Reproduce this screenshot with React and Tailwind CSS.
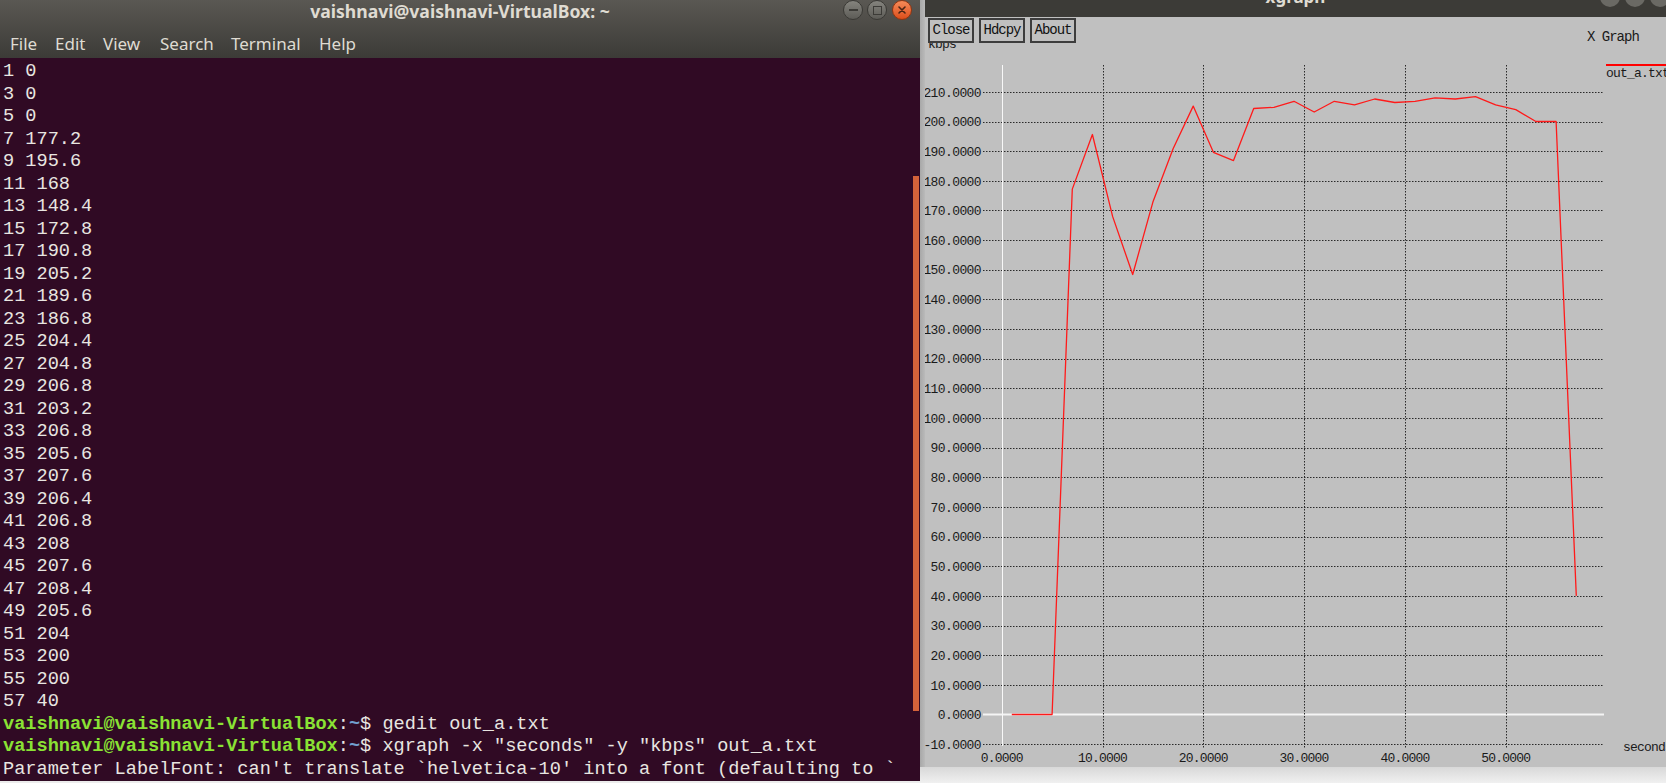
import React from 'react';

const rows = [
  '1 0', '3 0', '5 0', '7 177.2', '9 195.6', '11 168', '13 148.4', '15 172.8',
  '17 190.8', '19 205.2', '21 189.6', '23 186.8', '25 204.4', '27 204.8', '29 206.8',
  '31 203.2', '33 206.8', '35 205.6', '37 207.6', '39 206.4', '41 206.8', '43 208',
  '45 207.6', '47 208.4', '49 205.6', '51 204', '53 200', '55 200', '57 40'
];

const points = rows.map(r => r.split(' ').map(Number));

// page coords of the xgraph canvas
const X = t => 1001.7 + t * 10.08;
const Y = v => 714.5 - v * 2.965;
const yTicks = [];
for (let v = -10; v <= 210; v += 10) yTicks.push(v);
const xTicks = [0, 10, 20, 30, 40, 50];

const mono = "'Liberation Mono', 'DejaVu Sans Mono', monospace";

const menu = [
  ['File', 'w-[45px]'],
  ['Edit', 'w-[48px]'],
  ['View', 'w-[57px]'],
  ['Search', 'w-[71px]'],
  ['Terminal', 'w-[88px]'],
  ['Help', 'w-[45px]'],
];

function Prompt({ cmd }) {
  return (
    <div className="whitespace-pre h-[22.5px]">
      <span className="font-bold text-[#8ae234]">vaishnavi@vaishnavi-VirtualBox</span>
      <span>:</span>
      <span className="font-bold text-[#729fcf]">~</span>
      <span>$ {cmd}</span>
    </div>
  );
}

function WinButtons() {
  return (
    <div className="flex gap-[4px] items-start">
      <div className="w-[20px] h-[20px] rounded-full bg-gradient-to-b from-[#85847e] to-[#5d5c57] border border-[#3a3935] flex items-center justify-center">
        <div className="w-[9px] h-[2px] bg-[#3c3b37]" />
      </div>
      <div className="w-[20px] h-[20px] rounded-full bg-gradient-to-b from-[#85847e] to-[#5d5c57] border border-[#3a3935] flex items-center justify-center">
        <div className="w-[9px] h-[9px] border-[1.5px] border-[#3c3b37]" />
      </div>
      <div className="w-[20px] h-[20px] ml-[1px] rounded-full bg-gradient-to-b from-[#f58a58] to-[#dc4d17] border border-[#8f3512] flex items-center justify-center">
        <svg width="10" height="10" viewBox="0 0 10 10">
          <path d="M2 2 L8 8 M8 2 L2 8" stroke="#4a2414" strokeWidth="1.6" strokeLinecap="round" />
        </svg>
      </div>
    </div>
  );
}

function Terminal() {
  return (
    <div className="w-[920px] h-[781px] flex flex-col shrink-0">
      <div className="h-[58px] bg-gradient-to-b from-[#5a5853] to-[#3c3b37] flex flex-col text-[#dfdbd2] font-['Noto_Sans',sans-serif]">
        <div className="h-[30px] grid grid-cols-[1fr_auto_1fr]">
          <div />
          <div className="text-[17.6px] leading-[22px] font-bold">vaishnavi@vaishnavi-VirtualBox: ~</div>
          <div className="flex justify-end pr-[8px]">
            <WinButtons />
          </div>
        </div>
        <div className="h-[28px] flex items-center pl-[10px] text-[17px]">
          {menu.map(([m, w]) => (
            <span key={m} className={w}>{m}</span>
          ))}
        </div>
      </div>
      <div className="flex-1 bg-[#300a24] flex overflow-hidden">
        <div className="flex-1 pl-[3px] pt-[3px] text-[18.6px] leading-[22.5px] text-[#e8e6e1] font-['Liberation_Mono',monospace]">
          {rows.map(r => (
            <div key={r} className="whitespace-pre h-[22.5px]">{r}</div>
          ))}
          <Prompt cmd="gedit out_a.txt" />
          <Prompt cmd={'xgraph -x "seconds" -y "kbps" out_a.txt'} />
          <div className="whitespace-pre h-[22.5px]">Parameter LabelFont: can't translate `helvetica-10' into a font (defaulting to `</div>
        </div>
        <div className="w-[6px] mr-[1px]">
          <div className="mt-[118px] h-[535px] bg-[#d3623a]" />
        </div>
      </div>
    </div>
  );
}

function Plot() {
  return (
    <svg width="741" height="750" viewBox="925 17 741 750" className="block">
      <rect x="925" y="17" width="741" height="750" fill="#c0c0c0" />
      <text x="928" y="48" fontFamily={mono} fontSize="13" letterSpacing="-0.8" fill="#1a1a1a">kbps</text>
      <text x="1587" y="41" fontFamily={mono} fontSize="14" letterSpacing="-1" fill="#1a1a1a">X Graph</text>
      <line x1="1606" y1="65" x2="1666" y2="65" stroke="#ff0000" strokeWidth="2" />
      <text x="1606" y="77" fontFamily={mono} fontSize="13" letterSpacing="-0.8" fill="#1a1a1a">out_a.txt</text>

      {yTicks.map(v => {
        const y = Math.round(Y(v)) + 0.5;
        return (
          <g key={v}>
            {v !== 0 && (
              <line x1="983" y1={y} x2="1604" y2={y} stroke="#2a2a2a" strokeWidth="1" strokeDasharray="1.5 1.5" />
            )}
            <text x="981" y={Y(v) + 4.7} textAnchor="end" fontFamily={mono} fontSize="13" letterSpacing="-0.6" fill="#1a1a1a">
              {v.toFixed(4)}
            </text>
          </g>
        );
      })}
      <line x1="983" y1="714.5" x2="1604" y2="714.5" stroke="#f4f4f4" strokeWidth="2" />

      {xTicks.map(t => {
        const x = Math.round(X(t)) + 0.5;
        return (
          <g key={t}>
            {t === 0 ? (
              <line x1={x} y1="65" x2={x} y2="746" stroke="#f8f8f8" strokeWidth="1" />
            ) : (
              <line x1={x} y1="65" x2={x} y2="748" stroke="#2a2a2a" strokeWidth="1" strokeDasharray="1.5 1.5" />
            )}
            <text x={X(t)} y="762" textAnchor="middle" fontFamily={mono} fontSize="13" letterSpacing="-0.8" fill="#1a1a1a">
              {t.toFixed(4)}
            </text>
          </g>
        );
      })}
      <text x="1623" y="751" fontFamily={mono} fontSize="13" letterSpacing="-0.8" fill="#1a1a1a">seconds</text>

      <polyline
        points={points.map(([t, v]) => `${X(t).toFixed(1)},${Y(v).toFixed(1)}`).join(' ')}
        fill="none"
        stroke="#ff1a1a"
        strokeWidth="1.3"
        strokeLinejoin="round"
      />
    </svg>
  );
}

function XGraph() {
  return (
    <div className="flex-1 flex flex-col">
      <div className="h-[767px] flex">
        <div className="w-[5px] bg-gradient-to-r from-[#a8a8a8] to-[#bababa]" />
        <div className="flex-1 flex flex-col overflow-hidden">
          <div className="h-[17px] bg-[#3c3b37] relative overflow-hidden flex justify-center">
            <span className="-mt-[13px] text-[17px] leading-[20px] font-bold text-[#dfdbd2] font-['Noto_Sans',sans-serif]">xgraph</span>
            <div className="absolute right-[-4px] top-[-13px] flex gap-[5px]">
              <div className="w-[20px] h-[20px] rounded-full bg-[#6a6964]" />
              <div className="w-[20px] h-[20px] rounded-full bg-[#6a6964]" />
              <div className="w-[20px] h-[20px] rounded-full bg-[#6a6964]" />
            </div>
          </div>
          <div className="relative h-[750px]">
            <Plot />
            <div className="absolute left-[3px] top-[1px] flex gap-[5px] font-['Liberation_Mono',monospace] text-[14px] tracking-[-1px] text-[#111]">
              {['Close', 'Hdcpy', 'About'].map(b => (
                <div key={b} className="w-[46px] h-[25px] border-2 border-[#3d3d3d] bg-[#c0c0c0] flex items-center justify-center">
                  {b}
                </div>
              ))}
            </div>
          </div>
        </div>
      </div>
      <div className="flex-1 bg-gradient-to-b from-[#d8d8d8] to-[#f0f0f0]" />
    </div>
  );
}

export default function App() {
  return (
    <div className="w-[1666px] h-[783px] bg-[#ececec] flex overflow-hidden">
      <Terminal />
      <XGraph />
    </div>
  );
}
